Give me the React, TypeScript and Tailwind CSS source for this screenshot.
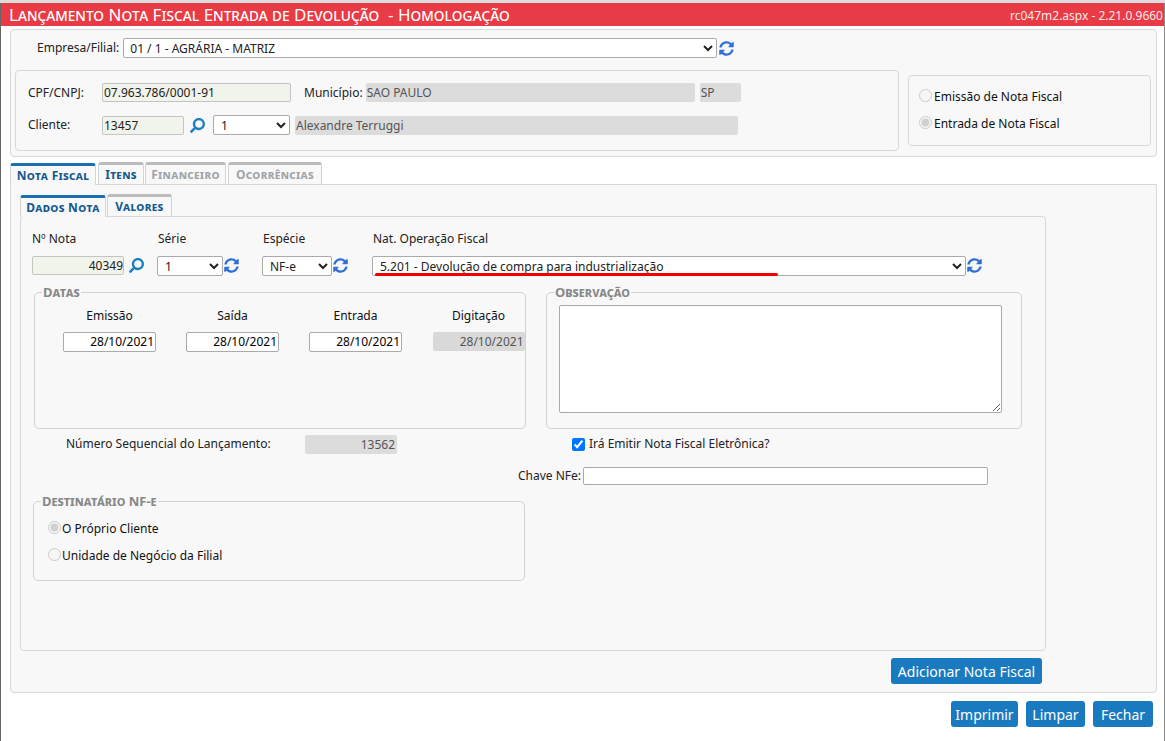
import React from "react";
import { FaSyncAlt, FaSearch } from "react-icons/fa";

const Sync = ({ className = "" }: { className?: string }) => (
  <FaSyncAlt className={"text-[#2f6fd6] w-[15px] h-[17px] shrink-0 " + className} />
);
const Lupa = ({ className = "" }: { className?: string }) => (
  <FaSearch className={"text-[#1b7fc4] w-[15px] h-[15px] shrink-0 -scale-x-100 " + className} />
);

const inputRO =
  "h-[19px] bg-[#dcdcdc] rounded-[2px] text-[12px] text-[#555] px-[1px] leading-[19px] shrink-0";
const inputGreen =
  "h-[19px] bg-[#f1f4ea] border border-[#c4c4c4] rounded-[2px] text-[12px] text-[#222] pl-[1px] leading-[17px] shrink-0";
const selectCls =
  "h-[20px] bg-white border border-[#aaa] rounded-[2px] text-[12px] text-[#222] pl-[2px] shrink-0";
const dateCls =
  "w-[93px] h-[20px] bg-white border border-[#aaa] rounded-[2px] text-[12px] text-black text-right pr-[1px] leading-[18px]";
const legendCls =
  "ml-[7px] px-[1px] text-[13px] font-bold text-[#888] [font-family:'Liberation_Sans',sans-serif] [font-variant:small-caps] leading-[14px]";
const btn =
  "h-[26px] bg-[#1a7abf] text-white rounded-[3px] text-[14px] [font-family:'Liberation_Sans',sans-serif] flex items-center justify-center";

const Tab = ({ label, w, active, disabled, ml }: { label: string; w: string; active?: boolean; disabled?: boolean; ml: string }) => (
  <div
    className={
      "h-[22px] flex items-center justify-center rounded-t-[3px] text-[12px] font-bold [font-family:'Liberation_Sans',sans-serif] [font-variant:small-caps] tracking-[0.3px] border-x border-t-[3px] " +
      w + " " + ml + " " +
      (active
        ? "bg-[#f8f8f8] border-t-[#1a6fb0] border-x-[#d4d4d4] text-[#14588f] relative top-[1px] "
        : "bg-[#f8f8f8] border-t-[#bbb] border-x-[#d4d4d4] ") +
      (disabled ? "text-[#a0a4a8]" : active ? "" : "text-[#14588f]")
    }
  >
    {label}
  </div>
);

export default function App() {
  return (
    <div className="w-[1165px] h-[741px] overflow-hidden bg-white flex flex-col relative text-[12px] text-[#222] [font-family:'DejaVu_Sans',sans-serif] border-t-[3px] border-t-[#ddd]">
      <div className="absolute left-0 top-0 w-[1px] h-full bg-[#666]" />
      <div className="absolute right-0 top-0 w-[1px] h-full bg-[#888]" />
      {/* header */}
      <div className="h-[23px] bg-[#e83b45] flex items-center justify-between text-white shrink-0 pl-[9px] pr-[2px]">
        <span className="text-[17px] leading-[23px] [font-family:'Liberation_Sans',sans-serif] [font-variant:small-caps] whitespace-pre">
          Lançamento Nota Fiscal Entrada de Devolução  - Homologação
        </span>
        <span className="text-[12px] text-[#f4e8e8] pt-[2px]">rc047m2.aspx - 2.21.0.9660</span>
      </div>

      {/* top panel */}
      <div className="ml-[10px] mt-[3px] w-[1147px] h-[128px] shrink-0 bg-[#f8f8f8] border border-[#d8d8d8] rounded-[4px] pl-[4px]">
        <div className="flex items-center h-[20px] mt-[8px]">
          <span className="ml-[22px] mr-[4px]">Empresa/Filial:</span>
          <select className={selectCls + " w-[594px]"} defaultValue="a">
            <option value="a">01 / 1 - AGRÁRIA - MATRIZ</option>
          </select>
          <Sync className="ml-[2px]" />
        </div>
        <div className="flex mt-[12px]">
          <div className="w-[884px] h-[81px] border border-[#d8d8d8] rounded-[4px] pl-[12px] pt-[12px]">
            <div className="flex items-center h-[19px]">
              <span className="w-[74px]">CPF/CNPJ:</span>
              <div className={inputGreen + " w-[189px]"}>07.963.786/0001-91</div>
              <span className="ml-[13px] mr-[3px]">Município:</span>
              <div className={inputRO + " w-[329px]"}>SAO PAULO</div>
              <div className={inputRO + " w-[41px] ml-[5px]"}>SP</div>
            </div>
            <div className="flex items-center h-[20px] mt-[13px]">
              <span className="w-[74px]">Cliente:</span>
              <div className={inputGreen + " w-[82px]"}>13457</div>
              <Lupa className="ml-[6px]" />
              <select className={selectCls + " w-[77px] ml-[8px] pl-[3px]"} defaultValue="1">
                <option value="1">1</option>
              </select>
              <div className={inputRO + " w-[443px] ml-[5px]"}>Alexandre Terruggi</div>
            </div>
          </div>
          <div className="ml-[9px] mt-[5px] w-[243px] h-[71px] border border-[#d8d8d8] rounded-[4px] pl-[10px] pt-[12px] text-[#111]">
            <label className="flex items-center h-[18px]">
              <input type="radio" disabled className="w-[13px] h-[13px] m-0 mb-[3px] mr-[2px]" />
              Emissão de Nota Fiscal
            </label>
            <label className="flex items-center h-[18px] mt-[9px]">
              <input type="radio" disabled defaultChecked className="w-[13px] h-[13px] m-0 mb-[3px] mr-[2px]" />
              Entrada de Nota Fiscal
            </label>
          </div>
        </div>
      </div>

      {/* main tabs */}
      <div className="flex ml-[10px] mt-[5px] h-[23px] shrink-0 items-start relative z-10">
        <Tab label="Nota Fiscal" w="w-[86px]" ml="" active />
        <Tab label="Itens" w="w-[46px]" ml="ml-[2px]" />
        <Tab label="Financeiro" w="w-[81px]" ml="ml-[1px]" disabled />
        <Tab label="Ocorrências" w="w-[94px]" ml="ml-[2px]" disabled />
      </div>

      {/* main panel */}
      <div className="ml-[10px] w-[1147px] h-[509px] shrink-0 bg-[#f8f8f8] border border-[#d8d8d8] rounded-b-[4px] pl-[9px] pt-[9px] -mt-[1px]">
        <div className="flex h-[23px] items-start relative z-10">
          <Tab label="Dados Nota" w="w-[86px]" ml="" active />
          <Tab label="Valores" w="w-[65px]" ml="ml-[1px]" />
        </div>
        <div className="w-[1026px] h-[435px] border border-[#d8d8d8] rounded-[4px] -mt-[1px] relative">
          {/* row labels */}
          <div className="flex mt-[14px] ml-[11px] h-[16px] items-center">
            <span className="w-[126px]">Nº Nota</span>
            <span className="w-[105px]">Série</span>
            <span className="w-[110px]">Espécie</span>
            <span>Nat. Operação Fiscal</span>
          </div>
          {/* row fields */}
          <div className="flex mt-[8px] ml-[11px] items-center h-[21px]">
            <div className={inputGreen + " w-[92px] text-right pr-[0px]"}>40349</div>
            <Lupa className="ml-[5px]" />
            <select className={selectCls + " w-[66px] ml-[13px] pl-[3px]"} defaultValue="1">
              <option value="1">1</option>
            </select>
            <Sync className="ml-[1px]" />
            <select className={selectCls + " w-[70px] ml-[23px] pl-[3px]"} defaultValue="n">
              <option value="n">NF-e</option>
            </select>
            <Sync className="ml-[1px]" />
            <select className={selectCls + " w-[594px] ml-[24px] pl-[3px]"} defaultValue="d">
              <option value="d">5.201 - Devolução de compra para industrialização</option>
            </select>
            <Sync className="ml-[1px]" />
          </div>
          <div className="absolute left-[354px] top-[56px] w-[403px] h-[3px] bg-[#f00000] rounded-full" />

          {/* fieldsets */}
          <div className="flex mt-[9px] ml-[13px]">
            <fieldset className="w-[491px] h-[144px] border border-[#d2d2d2] rounded-[5px] m-0 p-0">
              <legend className={legendCls}>Datas</legend>
              <div className="flex ml-[28px] mt-[9px] text-[#111]">
                {[
                  ["Emissão", false],
                  ["Saída", false],
                  ["Entrada", false],
                  ["Digitação", true],
                ].map(([l, ro], i) => (
                  <div key={i} className={"w-[93px] flex flex-col items-center " + (i > 0 ? "ml-[30px]" : "")}>
                    <span className="h-[16px] leading-[16px]">{l as string}</span>
                    <div
                      className={
                        "mt-[8px] " +
                        (ro
                          ? "w-[92px] h-[19px] bg-[#d9d9d9] rounded-[2px] text-right pr-[1px] leading-[19px] text-[#555]"
                          : dateCls)
                      }
                    >
                      28/10/2021
                    </div>
                  </div>
                ))}
              </div>
            </fieldset>
            <fieldset className="ml-[20px] w-[476px] h-[144px] border border-[#d2d2d2] rounded-[5px] m-0 p-0">
              <legend className={legendCls}>Observação</legend>
              <textarea className="block ml-[12px] mt-[6px] w-[443px] h-[108px] bg-white border border-[#aaa] rounded-[2px]" />
            </fieldset>
          </div>

          {/* sequencial / checkbox */}
          <div className="flex items-center h-[20px] mt-[5px]">
            <span className="ml-[45px] w-[239px] text-[#222]">Número Sequencial do Lançamento:</span>
            <div className={inputRO + " w-[92px] text-right pr-[2px]"}>13562</div>
            <label className="flex items-center ml-[175px]">
              <input type="checkbox" defaultChecked className="w-[13px] h-[13px] m-0 mr-[4px]" />
              Irá Emitir Nota Fiscal Eletrônica?
            </label>
          </div>
          {/* chave */}
          <div className="flex items-center h-[19px] mt-[12px]">
            <span className="ml-[497px] mr-[2px]">Chave NFe:</span>
            <div className="w-[405px] h-[18px] bg-white border border-[#aaa] rounded-[2px]" />
          </div>

          {/* destinatário */}
          <fieldset className="ml-[12px] mt-[9px] w-[492px] h-[87px] border border-[#d2d2d2] rounded-[5px] m-0 p-0 text-[#111]">
            <legend className={legendCls}>Destinatário NF-e</legend>
            <label className="flex items-center h-[18px] ml-[14px] mt-[12px]">
              <input type="radio" disabled defaultChecked className="w-[13px] h-[13px] m-0 mb-[3px] mr-[1px]" />
              O Próprio Cliente
            </label>
            <label className="flex items-center h-[18px] ml-[14px] mt-[9px]">
              <input type="radio" disabled className="w-[13px] h-[13px] m-0 mb-[3px] mr-[1px]" />
              Unidade de Negócio da Filial
            </label>
          </fieldset>
        </div>
        <div className="flex mt-[7px] ml-[871px]">
          <button className={btn + " w-[151px]"}>Adicionar Nota Fiscal</button>
        </div>
      </div>

      {/* bottom buttons */}
      <div className="flex ml-[951px] mt-[8px] shrink-0">
        <button className={btn + " w-[67px]"}>Imprimir</button>
        <button className={btn + " w-[59px] ml-[8px]"}>Limpar</button>
        <button className={btn + " w-[60px] ml-[8px]"}>Fechar</button>
      </div>
    </div>
  );
}
